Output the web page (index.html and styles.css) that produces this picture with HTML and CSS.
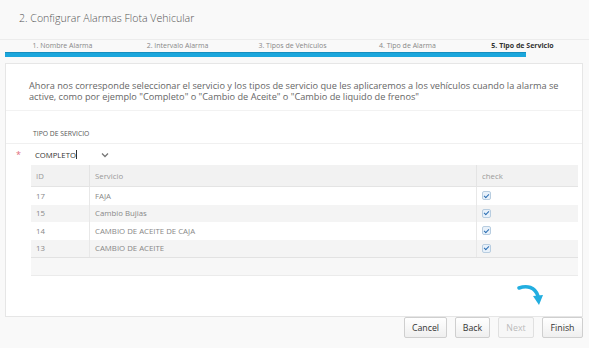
FILE: index.html
```html
<!DOCTYPE html>
<html lang="es">
<head>
    <meta charset="UTF-8">
    <meta name="viewport" content="width=device-width, initial-scale=1.0">
    <title>Configurar Alarmas Flota Vehicular</title>
    <link rel="stylesheet" href="styles.css">
</head>
<body>
    <h1 class="title">2. Configurar Alarmas Flota Vehicular</h1>

    <!-- Wizard steps -->
    <div class="steps">
        <div class="step-labels">
            <span>1. Nombre Alarma</span>
            <span>2. Intervalo Alarma</span>
            <span>3. Tipos de Vehículos</span>
            <span>4. Tipo de Alarma</span>
            <span class="active">5. Tipo de Servicio</span>
        </div>
        <div class="step-bar"></div>
    </div>

    <div class="panel">
        <p class="intro">Ahora nos corresponde seleccionar el servicio y los tipos de servicio que les aplicaremos a los vehículos cuando la alarma se active, como por ejemplo "Completo" o "Cambio de Aceite" o "Cambio de liquido de frenos"</p>

        <div class="field">
            <div class="field-label">TIPO DE SERVICIO</div>
            <div class="field-row">
                <span class="required">*</span>
                <div class="combo">
                    <span class="combo-text">COMPLETO<span class="caret"></span></span>
                    <svg class="chevron" width="8" height="6" viewBox="0 0 8 6"><path d="M1 1.5 L4 4.5 L7 1.5" fill="none" stroke="#777" stroke-width="1.3"/></svg>
                </div>
            </div>

            <table class="grid">
                <thead>
                    <tr><th class="col-id">ID</th><th>Servicio</th><th class="col-check">check</th></tr>
                </thead>
                <tbody>
                    <tr><td>17</td><td>FAJA</td><td><span class="checkbox"></span></td></tr>
                    <tr><td>15</td><td>Cambio Bujias</td><td><span class="checkbox"></span></td></tr>
                    <tr><td>14</td><td>CAMBIO DE ACEITE DE CAJA</td><td><span class="checkbox"></span></td></tr>
                    <tr><td>13</td><td>CAMBIO DE ACEITE</td><td><span class="checkbox"></span></td></tr>
                </tbody>
            </table>
            <div class="grid-footer"></div>
        </div>

        <!-- hint arrow pointing at Finish -->
        <svg class="hint-arrow" width="30" height="26" viewBox="0 0 30 26">
            <path d="M2 4 C10 1 18 3 21 12" fill="none" stroke="#22aee0" stroke-width="3.5" stroke-linecap="round"/>
            <path d="M16 12 L26 11 L22 21 Z" fill="#22aee0"/>
        </svg>
    </div>

    <div class="actions">
        <button class="btn-cancel">Cancel</button>
        <button class="btn-back">Back</button>
        <button class="btn-next disabled">Next</button>
        <button class="btn-finish">Finish</button>
    </div>
</body>
</html>
```

FILE: styles.css
```css
body {
    margin: 0;
    width: 589px;
    height: 348px;
    background-color: #f9f9f9;
    font-family: "Open Sans", Arial, sans-serif;
    color: #666;
    overflow: hidden;
}

.title {
    margin: 0;
    padding: 10px 19px 13px;
    font-size: 10.6px;
    line-height: 16px;
    font-weight: 300;
    color: #555;
}

.steps {
    border-top: 1px solid #ececec;
    padding-left: 5px;
}

.step-labels {
    display: grid;
    grid-template-columns: repeat(5, 115px);
    height: 11px;
}

.step-labels span {
    text-align: center;
    font-size: 7px;
    line-height: 11px;
    color: #888;
}

.step-labels .active {
    font-weight: bold;
    color: #333;
}

.step-bar {
    width: 521px;
    height: 5px;
    margin-top: 1px;
    background-color: #1ba6dc;
    border-top: 1px solid #168fc0;
    box-sizing: border-box;
}

.panel {
    position: relative;
    margin: 6px 6px 0 5px;
    background-color: #fff;
    border: 1px solid #e6e6e6;
    height: 254px;
    box-sizing: border-box;
}

.intro {
    margin: 0;
    padding: 16px 16px 8px 23px;
    font-size: 9.2px;
    line-height: 11px;
    color: #666;
    border-bottom: 1px solid #f2f2f2;
}

.field {
    padding-top: 17px;
}

.field-label {
    padding-left: 27px;
    font-size: 6.8px;
    line-height: 11px;
    color: #555;
    padding-bottom: 4px;
    border-bottom: 1px solid #f0f0f0;
}

.field-row {
    display: flex;
    align-items: center;
    height: 21px;
}

.required {
    width: 25px;
    padding-left: 10px;
    box-sizing: border-box;
    color: #e06a7a;
    font-size: 9px;
}

.combo {
    display: flex;
    align-items: center;
    width: 84px;
    height: 20px;
    padding-left: 4px;
    box-sizing: border-box;
}

.combo-text {
    flex: 1;
    font-size: 7.7px;
    color: #333;
}

.caret {
    display: inline-block;
    width: 1px;
    height: 9px;
    background-color: #333;
    vertical-align: -1px;
}

.chevron {
    margin-right: 6px;
}

.grid {
    margin-left: 25px;
    width: 547px;
    border-collapse: collapse;
    font-size: 7.8px;
    color: #888;
}

.grid th {
    height: 21px;
    padding: 0 5px;
    text-align: left;
    font-weight: normal;
    color: #999;
    background-color: #f2f2f2;
    border-bottom: 1px solid #e4e4e4;
    border-left: 1px solid #e4e4e4;
}

.grid th:first-child,
.grid td:first-child {
    border-left: none;
}

.grid .col-id {
    width: 48px;
}

.grid .col-check {
    width: 91px;
}

.grid td {
    height: 17.5px;
    padding: 0 5px;
    border-left: 1px solid #e8e8e8;
}

.grid tbody tr:nth-child(even) td {
    background-color: #f4f4f4;
}

.grid tbody tr:last-child td {
    border-bottom: 1px solid #e2e2e2;
}

.checkbox {
    display: block;
    width: 9px;
    height: 9px;
    border: 1px solid #b8cde0;
    border-radius: 2px;
    background-color: #e8f1fa;
    position: relative;
    box-sizing: border-box;
}

.checkbox::after {
    content: "";
    position: absolute;
    left: 2px;
    top: 0.5px;
    width: 2px;
    height: 4px;
    border: solid #2d6fb3;
    border-width: 0 1.5px 1.5px 0;
    transform: rotate(45deg);
}

.grid-footer {
    margin-left: 25px;
    width: 547px;
    height: 17px;
    background-color: #f7f7f7;
    border-bottom: 1px solid #ebebeb;
}

.hint-arrow {
    position: absolute;
    left: 511px;
    top: 220px;
}

.actions {
    display: flex;
    justify-content: flex-end;
    gap: 8px;
    padding: 0 6px 0 0;
}

.actions button {
    height: 21px;
    padding: 0;
    font-family: "Open Sans", Arial, sans-serif;
    font-size: 8.8px;
    color: #333;
    background: linear-gradient(#fff, #efefef);
    border: 1px solid #cfcfcf;
    border-radius: 2px;
}

.actions .btn-cancel {
    width: 43px;
}

.actions .btn-back {
    width: 35px;
}

.actions .btn-next {
    width: 36px;
}

.actions .btn-finish {
    width: 41px;
}

.actions .disabled {
    color: #bbb;
    background: #f7f7f7;
    border-color: #e0e0e0;
}
```
